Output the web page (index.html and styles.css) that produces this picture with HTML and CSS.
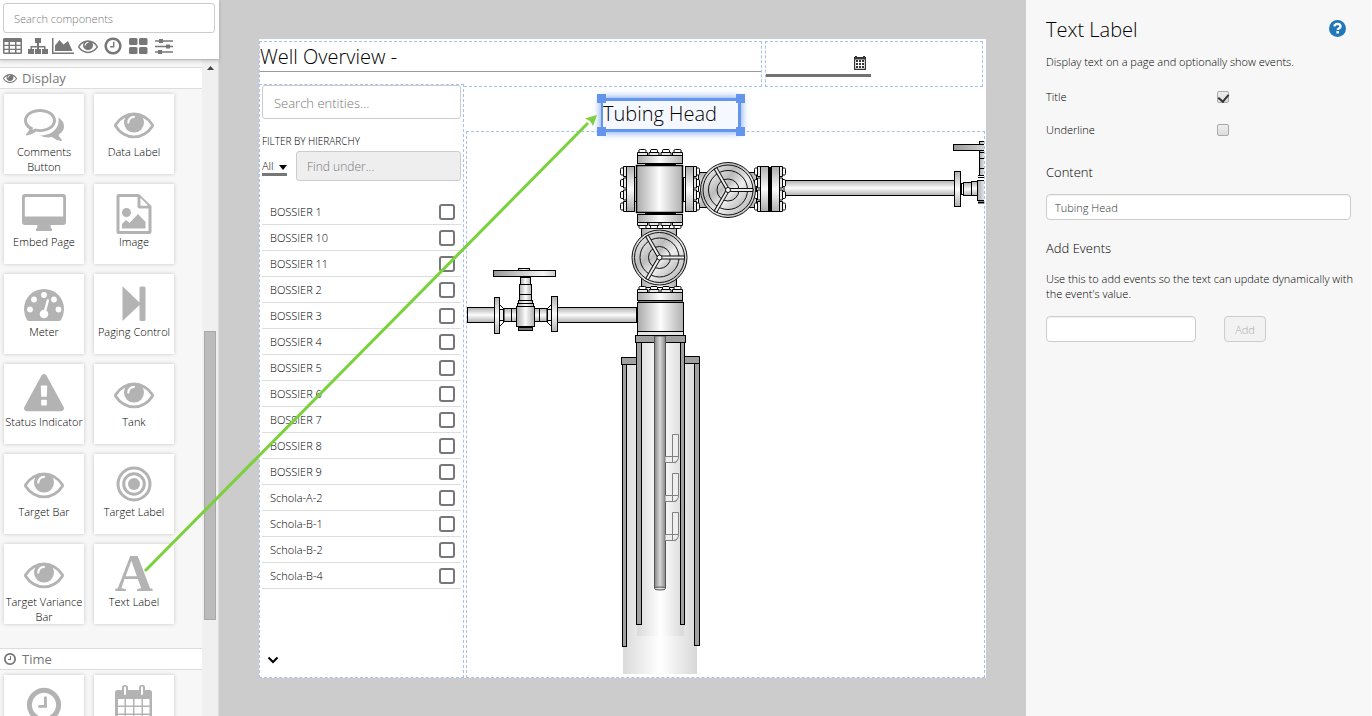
FILE: index.html
```html
<!DOCTYPE html>
<html lang="en">
<head>
<meta charset="utf-8">
<title>Well Overview</title>
<link rel="stylesheet" href="styles.css">
</head>
<body>
<svg class="defs" aria-hidden="true">
  <symbol id="i-eye" viewBox="0 0 1792 1792"><path d="M1664 960q-152-236-381-353 61 104 61 225 0 185-131.5 316.5t-316.5 131.5-316.5-131.5-131.5-316.5q0-121 61-225-229 117-381 353 133 205 333.500 326.500t434.500 121.500 434.500-121.500 333.500-326.500zm-720-384q0-20-14-34t-34-14q-125 0-214.500 89.500t-89.500 214.500q0 20 14 34t34 14 34-14 14-34q0-86 61-147t147-61q20 0 34-14t14-34zm848 384q0 34-20 69-140 230-376.500 368.500t-499.500 138.500-499.500-139-376.500-368q-20-35-20-69t20-69q140-229 376.500-368t499.500-139 499.500 139 376.500 368q20 35 20 69z"/></symbol>
  <symbol id="i-clock" viewBox="0 0 1792 1792"><path d="M1024 544v448q0 14-9 23t-23 9h-320q-14 0-23-9t-9-23v-64q0-14 9-23t23-9h224v-352q0-14 9-23t23-9h64q14 0 23 9t9 23zm416 352q0-148-73-273t-198-198-273-73-273 73-198 198-73 273 73 273 198 198 273 73 273-73 198-198 73-273zm224 0q0 209-103 385.500t-279.500 279.500-385.500 103-385.500-103-279.500-279.500-103-385.500 103-385.500 279.500-279.500 385.500-103 385.500 103 279.500 279.500 103 385.500z"/></symbol>
</svg>
<div class="app">
  <aside class="sidebar">
    <div class="sidebar-top">
      <input class="search" type="text" placeholder="Search components" aria-label="Search components">
      <nav class="categories" aria-label="Component categories">
        <button type="button" aria-label="Tables"><svg width="21" height="20" viewBox="0 0 21 20"><path fill-rule="evenodd" d="M1.500 2h16a1.500 1.500 0 0 1 1.500 1.500v13a1.500 1.500 0 0 1-1.500 1.500h-16a1.500 1.500 0 0 1-1.500-1.500v-13a1.500 1.500 0 0 1 1.500-1.500zM1.500 6v2.700h4V6zM7 6v2.700h5V6zM13.500 6v2.700h4V6zM1.500 10v2.700h4V10zM7 10v2.700h5V10zM13.500 10v2.700h4V10zM1.500 14v2.500h4V14zM7 14v2.500h5V14zM13.500 14v2.500h4V14z"/></svg></button>
        <button type="button" aria-label="Hierarchy"><svg width="20" height="20" viewBox="0 0 20 20"><path d="M7 2h6v5h-2v3h6.500v3H20v5h-6v-5h2v-1.600h-5V13h2v5H7v-5h2v-1.600H4V13h2v5H0v-5h2.500v-3H9V7H7z"/></svg></button>
        <button type="button" aria-label="Charts"><svg width="22" height="20" viewBox="0 0 22 20"><path d="M0 2h1.500v14.500H22V18H0zM3 15V9.500L7.500 4l4 4.500L16 5l4.500 10z"/></svg></button>
        <button type="button" aria-label="Display"><svg width="20" height="20"><use href="#i-eye"/></svg></button>
        <button type="button" aria-label="Time"><svg width="22" height="20"><use href="#i-clock"/></svg></button>
        <button type="button" aria-label="Layout"><svg width="21" height="20" viewBox="0 0 21 20"><g><rect x="1" y="2" width="8.500" height="7" rx="1.500"/><rect x="11" y="2" width="8.500" height="7" rx="1.500"/><rect x="1" y="11" width="8.500" height="7" rx="1.500"/><rect x="11" y="11" width="8.500" height="7" rx="1.500"/></g></svg></button>
        <button type="button" aria-label="Controls"><svg width="22" height="20" viewBox="0 0 22 20"><path d="M2 4.300h18v1.500H2zM2 9.800h18v1.500H2zM2 15.300h18v1.500H2z"/><path d="M6 3h4v4H6zM13 8.500h4v4h-4zM5 14h4v4H5z"/></svg></button>
      </nav>
    </div>
    <div class="sidebar-body">
      <div class="components">
        <h2 class="section"><svg width="14" height="14"><use href="#i-eye"/></svg>Display</h2>
        <div class="cards">
          <button class="card" type="button"><svg viewBox="0 0 40 40"><path fill-rule="evenodd" d="M16 5c9 0 16 5 16 11.500S25 28 16 28q-2 0-4-.4Q8 31 3 31.500c-1.300 0-1.300-1-.5-1.700Q5 27.500 5.500 25.300 0 22 0 16.500C0 10 7 5 16 5zm0 3C9 8 3 11.500 3 16.500c0 3 2.500 5.500 6 7l-.5 2.500 2.500-1.500q2.500.7 5 .7c7 0 13-3.700 13-8.700S23 8 16 8z"/><path d="M34.500 13.500Q40 17 40 22.500q0 5-5.500 8.300.5 2.500 3 4.500c.8.800.5 1.700-.5 1.700q-5-.5-9-3.900-6.500 1.200-12-1.600C27 31.500 36 25 34.500 13.500z"/></svg><span>Comments Button</span></button>
          <button class="card" type="button"><svg><use href="#i-eye"/></svg><span>Data Label</span></button>
          <button class="card" type="button"><svg viewBox="0 0 40 40"><path fill-rule="evenodd" d="M1 0h38q3 0 3 3v25q0 3-3 3H26.500q0 3 1.500 4v2H12v-2q1.500-1 1.500-4H1q-3 0-3-3V3q0-3 3-3zm1 3q-1.200 0-1.200 1.200V22.500h38.400V4.200Q39.200 3 38 3z"/></svg><span>Embed Page</span></button>
          <button class="card" type="button"><svg viewBox="0 0 40 40"><path fill-rule="evenodd" d="M5 0h20l12.500 12V38q0 2-2 2h-31q-2 0-2-2V2q0-2 2.500-2zm.5 3v34h29V14.500H25.500q-2 0-2-2V3zm21 .7v8h7.700z"/><circle cx="12.500" cy="18.500" r="4.500"/><path d="M8 34.500v-4.500l4-4 3.500 3 8.500-9 7.500 8v6.500z"/></svg><span>Image</span></button>
          <button class="card" type="button"><svg viewBox="0 0 40 40"><path d="M20 5a20 20 0 0 1 20 20q0 6-3 11-.7 1-2 1H5q-1.300 0-2-1-3-5-3-11A20 20 0 0 1 20 5z"/><g fill="#fff"><circle cx="6" cy="25.500" r="2.900"/><circle cx="10" cy="15.500" r="2.900"/><circle cx="20" cy="11" r="2.900"/><circle cx="30" cy="15.500" r="2.900"/><circle cx="34.500" cy="25.500" r="2.900"/><circle cx="20" cy="30" r="4.300"/></g><path d="M20.500 29l3.300-12.500" stroke="#fff" stroke-width="2.400" stroke-linecap="round"/></svg><span>Meter</span></button>
          <button class="card" type="button"><svg viewBox="0 0 40 40"><path d="M8.500 2.300L25.500 18.500V4q0-1.500 1.500-1.500h3q1.500 0 1.500 1.500v31.500q0 1.500-1.500 1.500h-3q-1.500 0-1.500-1.500V21L8.500 37z"/></svg><span>Paging Control</span></button>
          <button class="card" type="button"><svg viewBox="0 0 1792 1792"><path d="M1024 1375v-190q0-14-9.500-23.500t-22.500-9.500h-192q-13 0-22.500 9.500t-9.500 23.500v190q0 14 9.500 23.500t22.500 9.500h192q13 0 22.500-9.500t9.500-23.500zm-2-374l18-459q0-12-10-19-13-11-24-11h-220q-11 0-24 11-10 7-10 21l17 457q0 10 10 16.500t24 6.500h185q14 0 23.500-6.500t10.500-16.500zm-14-934l768 1408q35 63-2 126-17 29-46.500 46t-63.500 17h-1536q-34 0-63.500-17t-46.500-46q-37-63-2-126l768-1408q17-31 47-49t65-18 65 18 47 49z"/></svg><span>Status Indicator</span></button>
          <button class="card" type="button"><svg><use href="#i-eye"/></svg><span>Tank</span></button>
          <button class="card" type="button"><svg><use href="#i-eye"/></svg><span>Target Bar</span></button>
          <button class="card" type="button"><svg viewBox="0 0 40 40"><g fill="none" stroke="#b3b3b3" stroke-width="3"><circle cx="20" cy="20" r="16"/><circle cx="20" cy="20" r="10.300"/></g><circle cx="20" cy="20" r="6"/></svg><span>Target Label</span></button>
          <button class="card" type="button"><svg><use href="#i-eye"/></svg><span>Target Variance Bar</span></button>
          <button class="card" type="button"><svg viewBox="0 0 40 40" aria-hidden="true"><text class="letter" x="20" y="37" text-anchor="middle">A</text></svg><span>Text Label</span></button>
        </div>
        <h2 class="section section-next"><svg width="14" height="14"><use href="#i-clock"/></svg>Time</h2>
        <div class="cards">
          <button class="card" type="button" aria-label="Clock"><svg><use href="#i-clock"/></svg></button>
          <button class="card" type="button" aria-label="Calendar"><svg viewBox="0 0 40 40"><path fill-rule="evenodd" d="M3.500 5H8V2.500Q8 0 10.500 0h1Q14 0 14 2.500V5h11V2.500Q25 0 27.500 0h1Q31 0 31 2.500V5h4.500Q38 5 38 7.500V40H1V7.500Q1 5 3.500 5zM10 2.500V9q0 1 1 1t1-1V2.500q0-1-1-1t-1 1zm17 0V9q0 1 1 1t1-1V2.500q0-1-1-1t-1 1zM4 14v6.500h6.500V14zm8 0v6.500h7V14zm8.500 0v6.500h7V14zm8.500 0v6.500h6.500V14zM4 22v6.500h6.500V22zm8 0v6.500h7V22zm8.500 0v6.500h7V22zm8.500 0v6.500h6.500V22zM4 30v7h6.500v-7zm8 0v7h7v-7zm8.500 0v7h7v-7zm8.500 0v7h6.500v-7z"/></svg></button>
        </div>
      </div>
      <div class="track"><span class="track-up"></span><span class="thumb"></span></div>
    </div>
  </aside>

  <main class="stage">
    <div class="page">
      <header class="page-head">
        <div class="widget title-widget"><h1>Well Overview -</h1></div>
        <div class="widget date-widget">
          <div class="date-field">
            <input type="text" aria-label="Date">
            <svg class="date-icon" width="12" height="14" viewBox="0 0 12 14"><path fill="#333" fill-rule="evenodd" d="M0 1h1V0h2v1h6V0h2v1h1v13H0zM1.200 3.500v9.300h9.600V3.500z"/><path fill="#333" d="M2 4h2v2H2zM5 4h2v2H5zM8 4h2v2H8zM2 7h2v2H2zM5 7h2v2H5zM8 7h2v2H8zM2 10h2v2H2zM5 10h2v2H5zM8 10h2v2H8z"/></svg>
          </div>
        </div>
      </header>
      <div class="page-body">
        <section class="widget entities">
          <input class="entity-search" type="text" placeholder="Search entities..." aria-label="Search entities">
          <label class="filter-label" for="level">FILTER BY HIERARCHY</label>
          <div class="filter-row">
            <div class="level">
              <select id="level"><option>All</option></select>
              <svg width="8" height="5" viewBox="0 0 8 5"><path d="M0 0h8L4 5z"/></svg>
            </div>
            <input class="find" type="text" placeholder="Find under..." aria-label="Find under" disabled>
          </div>
          <ul class="entity-list">
            <li><label for="e1">BOSSIER 1</label><input id="e1" type="checkbox"></li>
            <li><label for="e2">BOSSIER 10</label><input id="e2" type="checkbox"></li>
            <li><label for="e3">BOSSIER 11</label><input id="e3" type="checkbox"></li>
            <li><label for="e4">BOSSIER 2</label><input id="e4" type="checkbox"></li>
            <li><label for="e5">BOSSIER 3</label><input id="e5" type="checkbox"></li>
            <li><label for="e6">BOSSIER 4</label><input id="e6" type="checkbox"></li>
            <li><label for="e7">BOSSIER 5</label><input id="e7" type="checkbox"></li>
            <li><label for="e8">BOSSIER 6</label><input id="e8" type="checkbox"></li>
            <li><label for="e9">BOSSIER 7</label><input id="e9" type="checkbox"></li>
            <li><label for="e10">BOSSIER 8</label><input id="e10" type="checkbox"></li>
            <li><label for="e11">BOSSIER 9</label><input id="e11" type="checkbox"></li>
            <li><label for="e12">Schola-A-2</label><input id="e12" type="checkbox"></li>
            <li><label for="e13">Schola-B-1</label><input id="e13" type="checkbox"></li>
            <li><label for="e14">Schola-B-2</label><input id="e14" type="checkbox"></li>
            <li><label for="e15">Schola-B-4</label><input id="e15" type="checkbox"></li>
          </ul>
          <button class="more" type="button" aria-label="Show more"><svg width="12" height="8" viewBox="0 0 12 8"><path d="M1.500 1.500L6 6l4.500-4.500" fill="none" stroke="#000" stroke-width="2"/></svg></button>
        </section>
        <div class="right">
          <div class="label-row">
            <div class="text-label"><span>Tubing Head</span><i class="h tl"></i><i class="h tr"></i><i class="h bl"></i><i class="h br"></i></div>
          </div>
          <div class="widget diagram">
            <svg viewBox="467 132 517 545" preserveAspectRatio="xMinYMin slice" role="img" aria-label="Wellhead diagram">
              <defs>
                <linearGradient id="gx"><stop offset="0" stop-color="#aaa"/><stop offset=".5" stop-color="#fcfcfc"/><stop offset="1" stop-color="#b0b0b0"/></linearGradient>
                <linearGradient id="gy" x2="0" y2="1"><stop offset="0" stop-color="#b0b0b0"/><stop offset=".5" stop-color="#fcfcfc"/><stop offset="1" stop-color="#b0b0b0"/></linearGradient>
                <linearGradient id="gw"><stop offset="0" stop-color="#dadada"/><stop offset=".5" stop-color="#fff"/><stop offset="1" stop-color="#d8d8d8"/></linearGradient>
                <linearGradient id="gt"><stop offset="0" stop-color="#858585"/><stop offset=".5" stop-color="#d8d8d8"/><stop offset="1" stop-color="#858585"/></linearGradient>
                <linearGradient id="gd" x2="1" y2="1"><stop offset="0" stop-color="#f8f8f8"/><stop offset=".35" stop-color="#bbb"/><stop offset=".6" stop-color="#eee"/><stop offset="1" stop-color="#aaa"/></linearGradient>
                <linearGradient id="gh"><stop offset="0" stop-color="#999"/><stop offset=".8" stop-color="#f4f4f4"/><stop offset="1" stop-color="#ccc"/></linearGradient>
                <g id="bolt"><path d="M.5 7V3.500h10V7z" fill="#e6e6e6"/><path d="M2 3.500V1.500Q2 .5 3.500.5h4Q9 .5 9 1.500v2z" fill="#fff"/></g>
                <g id="flange" stroke="#000"><use href="#bolt"/><use href="#bolt" x="11.500"/><use href="#bolt" x="23.500"/><use href="#bolt" x="35"/><rect x=".5" y="6.500" width="45" height="8" fill="url(#gx)"/></g>
                <g id="wheel" stroke="#111"><circle r="27.500" fill="url(#gd)"/><circle r="25" fill="url(#gd)"/><circle r="19.500" fill="url(#gd)"/><circle r="11" fill="url(#gd)"/>
                  <path d="M0-1.500H25v3H0z" fill="#eee"/><path d="M0-1.500H25v3H0z" fill="#eee" transform="rotate(120)"/><path d="M0-1.500H25v3H0z" fill="#eee" transform="rotate(240)"/><circle r="2.500" fill="#fff"/></g>
                <g id="hook" stroke="#808080" fill="#eee"><path d="M665 456.500h10.500a3 3 0 0 1-2.500 6H665z"/><path d="M672.500 434.500h6v22q0 5-5 6h-1z"/><path d="M665 456.500h13.500" fill="none"/></g>
              </defs>
              <rect x="623" y="364" width="74" height="310" fill="url(#gw)"/>
              <rect x="637" y="342" width="47" height="294" fill="url(#gw)"/>
              <g stroke="#000" fill="#a0a0a0">
                <rect x="622.500" y="363.500" width="4" height="283"/><rect x="694.500" y="362.500" width="5" height="283"/>
                <rect x="621.500" y="357.500" width="15" height="7"/><path d="M684.500 356.500h15v7h-15z"/>
                <rect x="636.500" y="341.500" width="5" height="283"/><rect x="680.500" y="341.500" width="4" height="283"/>
                <rect x="635.500" y="335.500" width="50" height="7"/>
              </g>
              <path d="M654.500 336v252q5.500 3 11 0V336z" fill="url(#gt)" stroke="#555"/><ellipse cx="660" cy="588.500" rx="5.500" ry="1.500" fill="#ddd" stroke="#555"/>
              <use href="#hook"/><use href="#hook" y="39"/><use href="#hook" y="78"/>
              <g stroke="#000">
                <rect x="641.500" y="228.500" width="35" height="59" fill="url(#gx)"/>
                <rect x="637.500" y="302.500" width="46" height="29" fill="url(#gx)"/><rect x="637.500" y="331.500" width="46" height="4" fill="#e4e4e4"/>
                <path d="M638 301l7-1.500h31l7 1.500z" fill="#000"/>
                <path d="M645 164h31M645 214h31" stroke-width="3"/>
                <rect x="633.500" y="177.500" width="3" height="24" fill="#eee"/><rect x="683.500" y="177.500" width="3" height="24" fill="#eee"/>
                <rect x="636.500" y="165.500" width="46" height="47" fill="url(#gx)" stroke-width="1.500"/>
                <rect x="698.500" y="172.500" width="58" height="35" fill="url(#gy)"/>
                <path d="M770 167v45" stroke-width="3"/>
                <rect x="784" y="180.500" width="171" height="15" fill="url(#gy)"/>
              </g>
              <use href="#flange" transform="translate(637 149)"/><use href="#flange" transform="translate(637 229) scale(1 -1)"/><use href="#flange" transform="translate(637 286)"/>
              <use href="#flange" transform="translate(620 212) rotate(-90)"/><use href="#flange" transform="translate(700 166) rotate(90)"/><use href="#flange" transform="translate(754 212) rotate(-90)"/><use href="#flange" transform="translate(786 166) rotate(90)"/>
              <use href="#wheel" transform="translate(728 190)"/><use href="#wheel" transform="translate(659.500 257.500)"/>
              <g stroke="#000" fill="url(#gx)">
                <rect x="961.500" y="183.500" width="2" height="11"/><rect x="963.500" y="182.500" width="8" height="13" fill="url(#gy)"/><rect x="971.500" y="181.500" width="6" height="14" fill="url(#gy)"/>
                <rect x="954.500" y="171.500" width="6" height="35" fill="url(#gy)"/>
                <rect x="979.500" y="141.500" width="13" height="34"/><path d="M979 152.500h8M979 158.500h8M979 168.500h8M978 175.500h8M978 177.500h8"/>
                <rect x="977.500" y="180.500" width="18" height="20"/><path d="M978 202.500h8" stroke-width="2"/><rect x="953.500" y="144.500" width="60" height="6" fill="url(#gh)"/>
              </g>
              <g stroke="#000" fill="url(#gx)">
                <rect x="467.500" y="307.500" width="27" height="15" fill="url(#gy)"/><rect x="557.500" y="307.500" width="79" height="15" fill="url(#gy)"/>
                <rect x="499.500" y="309.500" width="4" height="11" fill="#eee"/><rect x="503.500" y="308.500" width="8" height="13" fill="url(#gy)"/><rect x="511.500" y="308.500" width="5" height="13" fill="url(#gy)"/>
                <rect x="534.500" y="308.500" width="5" height="13" fill="url(#gy)"/><rect x="539.500" y="308.500" width="8" height="13" fill="url(#gy)"/><rect x="547.500" y="309.500" width="4" height="11" fill="#eee"/>
                <path d="M500 305l4 4v13l-4 4M551 305l-4 4v13l4 4" fill="none"/>
                <rect x="494.500" y="297.500" width="5" height="36" fill="url(#gy)"/><rect x="551.500" y="296.500" width="6" height="35" fill="url(#gy)"/>
                <rect x="520.500" y="277.500" width="10" height="8"/><rect x="519.500" y="284.500" width="12" height="10"/><rect x="519.500" y="294.500" width="12" height="6"/><rect x="518.500" y="300.500" width="14" height="3"/><rect x="517.500" y="303.500" width="16" height="3"/>
                <rect x="518.500" y="327.500" width="14" height="3" fill="#777"/><rect x="516.500" y="306.500" width="18" height="20"/>
                <rect x="518.500" y="268.500" width="11" height="2"/><rect x="493.500" y="270.500" width="62" height="6" fill="url(#gh)"/>
              </g>
            </svg>
          </div>
        </div>
      </div>
    </div>
  </main>

  <aside class="panel">
    <div class="panel-head"><h2>Text Label</h2>
      <button class="help" type="button" aria-label="Help"><svg width="17" height="17" viewBox="0 0 17 17"><circle cx="8.500" cy="8.500" r="8.500" fill="#2277b8"/><path d="M5.400 6.400Q5.800 3.900 8.500 3.900q3 .1 3 2.500 0 1.300-1.600 2.100-1.200.7-1.200 1.500" fill="none" stroke="#fff" stroke-width="2.400"/><path d="M7.400 11h2.500v2.500H7.400z" fill="#fff"/></svg></button>
    </div>
    <p class="desc">Display text on a page and optionally show events.</p>
    <div class="check-row"><label for="opt-title">Title</label><input id="opt-title" type="checkbox" checked></div>
    <div class="check-row"><label for="opt-under">Underline</label><input id="opt-under" type="checkbox"></div>
    <label class="sub" for="content">Content</label>
    <input class="field" id="content" type="text" value="Tubing Head">
    <h3 class="sub">Add Events</h3>
    <p class="hint">Use this to add events so the text can update dynamically with the event's value.</p>
    <div class="add-row"><input class="field short" type="text" aria-label="Event"><button class="add" type="button" disabled>Add</button></div>
  </aside>
  <svg class="arrow" width="620" height="600" viewBox="0 0 620 600" aria-hidden="true"><path d="M145 571L588 123" stroke="#7bd13b" stroke-width="3"/><path d="M597 115L585 118.500 590 121 593 126z" fill="#7bd13b"/></svg>
</div>
</body>
</html>
```
FILE: styles.css
```css
* { box-sizing: border-box; }
body, h1, h2, h3, p, ul { margin: 0; padding: 0; }
body, input, button, select { font-family: "Open Sans", "Noto Sans", sans-serif; font-size: 11px; font-weight: 300; line-height: 15px; color: #000; }
h1, h2, h3 { font-weight: 300; }
button { border: 0; padding: 0; background: none; }
input { min-width: 0; margin: 0; }
ul { list-style: none; }
svg { display: block; }
::placeholder { color: #777; opacity: 1; }
.defs { position: absolute; width: 0; height: 0; }

.app { display: grid; grid-template-columns: 219px minmax(0, 1fr) 346px; height: 100vh; overflow: hidden; position: relative; }

.sidebar { display: flex; flex-direction: column; background: #f7f7f7; min-height: 0; }
.sidebar-top { background: #fff; padding: 3px 4px 3px 3px; border-bottom: 1px solid #bbb; box-shadow: 0 1px 4px rgba(0, 0, 0, .2); z-index: 1; }
.search { display: block; width: 100%; height: 30px; border: 1px solid #ccc; border-radius: 3px; padding: 0 10px; }
.categories { display: flex; gap: 4px; padding-top: 3px; fill: #777; }
.sidebar-body { flex: 1; min-height: 0; display: flex; }
.components { flex: 1; overflow: hidden; padding-top: 7px; }
.section { display: flex; align-items: center; gap: 5px; height: 22px; padding-left: 3px; background: #fff; border: solid #ddd; border-width: 1px 0; font-size: 13px; font-weight: 400; color: #777; fill: #777; }
.section-next { margin-top: 19px; }
.cards { display: grid; grid-template-columns: 80px 80px; grid-auto-rows: 80px; gap: 10px; padding: 5px 4px; }
.card { display: flex; flex-direction: column; align-items: center; padding-top: 10px; background: #fff; box-shadow: 0 0 4px rgba(0, 0, 0, .2); fill: #b3b3b3; text-align: center; color: #000; }
.card svg { width: 40px; height: 40px; flex: none; overflow: visible; }
.letter { font: bold 53px "Liberation Serif", serif; }
.track { width: 17px; background: #f0f0f0; padding: 6px 2px 0; border-right: 1px solid #ddd; }
.track-up { display: block; width: 7px; height: 4px; margin-left: 3px; background: #444; clip-path: polygon(50% 0, 100% 100%, 0 100%); }
.thumb { display: block; height: 289px; margin-top: 261px; background: #bbb; border: 1px solid #a8a8a8; }

.stage { background: #ccc; padding: 39px 40px 38px; min-height: 0; display: flex; }
.page { flex: 1; min-width: 0; background: #fff; padding: 2px 1px 0 0; display: flex; flex-direction: column; }
.widget { border: 1px dashed #a9c1f0; }
.page-head { display: flex; gap: 3px; height: 46px; padding-right: 2px; flex: none; }
.title-widget { flex: 1; }
.title-widget h1 { font-size: 20px; line-height: 29px; height: 30px; border-bottom: 1px solid #999; white-space: nowrap; }
.date-widget { width: 218px; padding-top: 7px; }
.date-field { position: relative; width: 105px; }
.date-field input { display: block; width: 100%; height: 28px; border: 0; border-bottom: 3px solid #707370; border-radius: 0 3px 0 0; }
.date-icon { position: absolute; right: 5px; top: 7px; }
.page-body { flex: 1; min-height: 0; display: grid; grid-template-columns: 205px minmax(0, 1fr); gap: 2px; margin-top: -3px; }
.entities { background: #fff; padding: 0 2px; display: flex; flex-direction: column; }
.entity-search { height: 34px; border: 1px solid #ccc; border-radius: 3px; padding: 2px 11px 0; font-size: 13px; }
.filter-label { margin-top: 15px; font-size: 10px; }
.filter-row { display: flex; gap: 9px; margin-top: 2px; }
.level { position: relative; width: 25px; padding-top: 7px; }
.level select { display: block; width: 100%; height: 18px; border: 0; border-bottom: 3px solid #777; padding: 0; background: none; appearance: none; border-radius: 0; }
.level svg { position: absolute; right: 0; top: 14px; }
.find { flex: 1; height: 30px; border: 1px solid #ccc; border-radius: 3px; background: #eee; padding: 0 10px; font-size: 12px; }
.entity-list { margin-top: 18px; }
.entity-list li { display: flex; align-items: center; justify-content: space-between; height: 26px; border-bottom: 1px solid #ddd; padding: 0 6px 0 8px; }
.entity-list input { appearance: none; width: 16px; height: 16px; border: 2px solid #777; border-radius: 3px; background: #fff; }
.more { margin: auto auto 13px 5px; }
.right { min-width: 0; display: flex; flex-direction: column; }
.label-row { height: 47px; padding: 14px 0 0 135px; flex: none; }
.text-label { position: relative; width: 140px; height: 34px; border: solid #6495ed; border-width: 3px 3px 3px 2px; background: #f6f8ff; box-shadow: 0 0 8px #6495ed; font-size: 20px; line-height: 26px; z-index: 1; white-space: nowrap; }
.h { position: absolute; width: 9px; height: 9px; background: #6495ed; }
.tl { left: -6px; top: -7px; }
.tr { right: -7px; top: -7px; }
.bl { left: -6px; bottom: -7px; }
.br { right: -7px; bottom: -7px; }
.diagram { flex: 1; min-height: 0; }
.diagram svg { width: 100%; height: 100%; }

.panel { background: #f7f7f7; padding: 16px 20px; border-right: 1px solid #fff; }
.panel-head { display: flex; justify-content: space-between; align-items: center; padding-right: 5px; height: 28px; }
.panel-head h2 { font-size: 20px; line-height: 28px; }
.help { margin-bottom: 4px; }
.desc { margin: 10px 0 11px; }
.check-row { display: grid; grid-template-columns: 171px 13px; align-items: center; height: 33px; }
.check-row input { appearance: none; width: 12px; height: 12px; border: 1px solid #aaa; border-radius: 2px; background: linear-gradient(#eee, #ddd); }
.check-row input:checked { display: grid; place-items: center; }
.check-row input:checked::before { content: ""; width: 5px; height: 8px; border: solid #333; border-width: 0 2px 2px 0; transform: rotate(40deg); margin-bottom: 2px; }
.sub { display: block; font-size: 13px; line-height: 18px; margin-top: 18px; }
.check-row + .sub { margin-top: 17px; }
.field + .sub { margin-top: 19px; }
.field { display: block; width: 100%; height: 26px; border: 1px solid #ccc; border-radius: 4px; padding: 0 8px; margin-top: 13px; color: #333; background: #fff; box-shadow: inset 0 1px 1px rgba(0, 0, 0, .06); }
.hint { margin: 14px -12px 0 0; }
.add-row { display: flex; align-items: center; gap: 28px; margin-top: 15px; }
.short { width: 150px; margin-top: 0; }
.add { width: 42px; height: 26px; border: 1px solid #ccc; border-radius: 4px; background: #f2f2f2; color: #aaa; }
.arrow { position: absolute; left: 0; top: 0; pointer-events: none; z-index: 2; }
```
